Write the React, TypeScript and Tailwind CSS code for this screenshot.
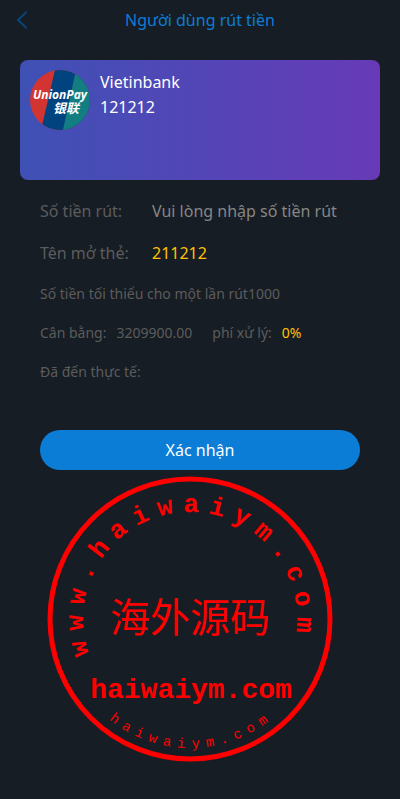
type RingTextProps = {
  text: string;
  radius: number;
  start: number;
  step: number;
  bottom?: boolean;
  className: string;
};

// One letter per angle, 0 is straight up (or straight down for the bottom ring)
function RingText({ text, radius, start, step, bottom, className }: RingTextProps) {
  return (
    <g className={className}>
      {text.split("").map((char, i) => (
        <text
          key={i}
          x={143}
          y={bottom ? 143 + radius : 143 - radius}
          textAnchor="middle"
          transform={`rotate(${start + step * i} 143 143)`}
        >
          {char}
        </text>
      ))}
    </g>
  );
}

function Stamp() {
  return (
    <svg viewBox="0 0 286 286" className="w-[286px] fill-[#ff0000]" role="img" aria-label="haiwaiym.com">
      <circle cx="143" cy="143" r="140" fill="none" stroke="#ff0000" strokeWidth="5" />
      <RingText
        text="www.haiwaiym.com"
        radius={107}
        start={-105}
        step={13.2}
        className="font-['Liberation_Mono',monospace] text-[26px] font-bold"
      />
      <text x="143" y="156" textAnchor="middle" className="font-['Noto_Sans_CJK_SC',sans-serif] text-[40px]">
        海外源码
      </text>
      <text
        x="144"
        y="222"
        textAnchor="middle"
        className="font-['Liberation_Mono',monospace] text-[28px] font-bold"
      >
        haiwaiym.com
      </text>
      <RingText
        text="haiwaiym.com"
        radius={129}
        start={37}
        step={-6.6}
        bottom
        className="font-['Liberation_Mono',monospace] text-[14px]"
      />
    </svg>
  );
}

function UnionPayLogo() {
  return (
    <svg viewBox="0 0 60 60" className="size-[60px] shrink-0" role="img" aria-label="UnionPay">
      <defs>
        <clipPath id="logo-round">
          <circle cx="30" cy="30" r="30" />
        </clipPath>
      </defs>
      <g clipPath="url(#logo-round)">
        <rect width="60" height="60" fill="#d23431" />
        <path d="M25 0H60V60H11Z" fill="#01437f" />
        <path d="M46 0H60V60H33Z" fill="#127e82" />
      </g>
      <g fill="#fff" className="font-bold italic">
        <text x="30" y="29" textAnchor="middle" className="font-['Open_Sans',sans-serif] text-[12px]">
          UnionPay
        </text>
        <text x="36" y="43" textAnchor="middle" className="font-['Noto_Sans_CJK_SC',sans-serif] text-[13px]">
          银联
        </text>
      </g>
    </svg>
  );
}

export default function App() {
  return (
    <div className="min-h-screen bg-[#171d24] pb-9 font-['Noto_Sans','Noto_Sans_CJK_SC',sans-serif] text-base text-[#5c5c5c]">
      <header className="grid h-10 grid-cols-[40px_1fr_40px] items-center">
        <button type="button" aria-label="Back" className="flex h-10 items-center pl-4">
          <svg viewBox="0 0 12 18" className="h-[18px] w-3" fill="none" stroke="#07457c" strokeWidth="2">
            <path d="M10.5 1L2 9l8.500 8" />
          </svg>
        </button>
        <h1 className="text-center text-[#0b7dd7]">Người dùng rút tiền</h1>
      </header>

      <main>
        <section className="mx-5 mt-5 flex h-[120px] gap-2.5 rounded-lg bg-linear-to-r/srgb from-[#3f51b5] to-[#673ab7] p-2.5 text-white">
          <UnionPayLogo />
          <div className="leading-[25px]">
            <p>Vietinbank</p>
            <p>121212</p>
          </div>
        </section>

        <form className="px-10 pt-2.5" onSubmit={(e) => e.preventDefault()}>
          <div className="flex h-[42px] items-center">
            <label htmlFor="amount" className="w-28 shrink-0">
              Số tiền rút:
            </label>
            <input
              id="amount"
              type="text"
              inputMode="numeric"
              placeholder="Vui lòng nhập số tiền rút"
              className="min-w-0 flex-1 bg-transparent text-white outline-none placeholder:text-[#868686]"
            />
          </div>
          <div className="flex h-[42px] items-center">
            <span className="w-28 shrink-0">Tên mở thẻ:</span>
            <span className="text-[#ffc107]">211212</span>
          </div>

          <div className="text-sm leading-[39px]">
            <p>Số tiền tối thiểu cho một lần rút1000</p>
            <p className="flex gap-5">
              <span className="flex gap-2.5">
                <span>Cân bằng:</span>
                <span>3209900.00</span>
              </span>
              <span className="flex gap-2.5">
                <span>phí xử lý:</span>
                <span className="text-[#ffc107]">0%</span>
              </span>
            </p>
            <p>Đã đến thực tế:</p>
          </div>

          <button type="submit" className="mt-[39px] h-10 w-full rounded-full bg-[#0b7dd7] text-white">
            Xác nhận
          </button>
        </form>

        <div className="mt-1.5 flex justify-center pr-5">
          <Stamp />
        </div>
      </main>
    </div>
  );
}
